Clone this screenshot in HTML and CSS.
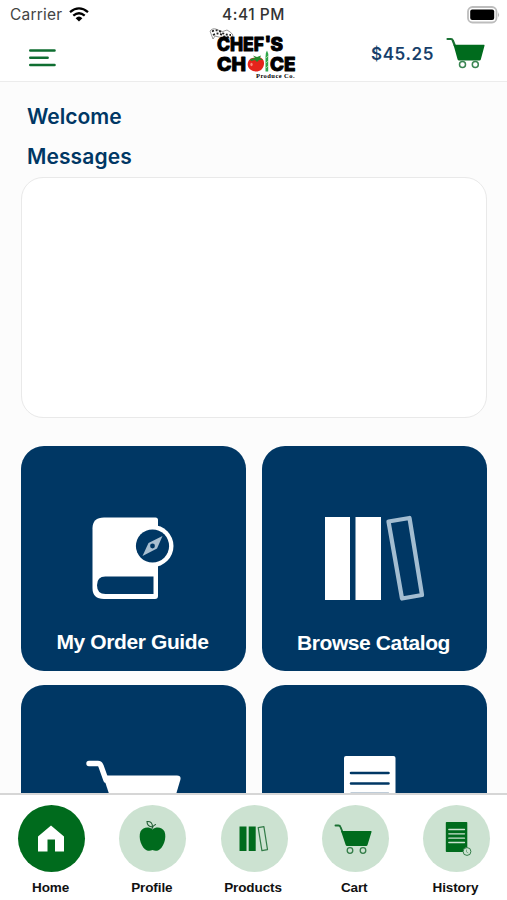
FILE: index.html
```html
<!DOCTYPE html>
<html lang="en">
<head>
	<meta charset="utf-8">
	<meta name="viewport" content="width=device-width, initial-scale=1">
	<title>Chef's Choice Produce Co.</title>
	<link rel="stylesheet" href="styles.css">
</head>
<body>
<div class="app">
	<header class="header">
		<div class="status">
			<div class="carrier">
				<span>Carrier</span>
				<svg width="20" height="15" viewBox="0 0 20 15">
					<path d="M1 5.2Q10-2.4 19 5.2M4.3 8.6Q10 3.8 15.7 8.6" fill="none" stroke="#000" stroke-width="2.3"/>
					<path d="M6.6 11.2Q10 8 13.4 11.2L10 14.6Z"/>
				</svg>
			</div>
			<div class="time">4:41 PM</div>
			<svg class="battery" width="34" height="18" viewBox="0 0 34 18">
				<rect x="1" y="1" width="28.5" height="15.5" rx="4.5" fill="#fff" stroke="#bdbdbd" stroke-width="1.8"/>
				<rect x="3.2" y="3.5" width="24" height="10.5" rx="2"/>
				<path d="M31.2 6q1.8 2.7 0 5.4z" fill="#aaa"/>
			</svg>
		</div>
		<div class="topbar">
			<svg class="menu" width="27" height="18" viewBox="0 0 27 18">
				<path d="M1.3 1.5H25.5M1.3 8.8H18.6M1.3 16H25.5" fill="none" stroke="#0f6e31" stroke-width="2.6" stroke-linecap="round"/>
			</svg>
			<svg class="logo" width="90" height="54" viewBox="0 0 90 54">
				<!-- chequered ribbon -->
				<path d="M1 3Q4-1 9 2T18 2Q22 4 24 7L22 11Q19 8 15 9T6 8L4 11Z" fill="#fff" stroke="#555" stroke-width=".6"/>
				<path d="M3 3.5Q8 1 12 4T22 7M4 7Q9 4 13 7T21 9" fill="none" stroke="#222" stroke-width="1.8" stroke-dasharray="2 1.7"/>
				<g class="logo-name">
					<text x="8" y="23" textLength="47" lengthAdjust="spacingAndGlyphs">CHEF</text>
					<text x="55.5" y="22">'</text>
					<text x="61.5" y="23" textLength="12.5" lengthAdjust="spacingAndGlyphs">S</text>
					<text x="8" y="42.5" textLength="29" lengthAdjust="spacingAndGlyphs">CH</text>
					<text x="61" y="42.5" textLength="25.5" lengthAdjust="spacingAndGlyphs">CE</text>
				</g>
				<!-- tomato and asparagus stand in for the O and the I -->
				<path d="M39.5 33C42 28.5 46 30 47 29.5C51 28 55.5 31 55 36C54.5 41 51 43.500 47 43.5C42 43.5 36.5 39 39.5 33Z" fill="#e5241b"/>
				<path d="M41 31L46 30L44 27.5L48 29L52 27.5L51 30L54 32L50 32L48 34L46 32L42 33Z" fill="#238b2b"/>
				<ellipse cx="42.5" cy="36.5" rx="1.2" ry="1.8" fill="#ff8a7c"/>
				<path d="M56.5 43.5V29Q56.4 24.5 58 22.5Q59.8 25 59.2 30V43.5Z" fill="#2fa64a"/>
				<path d="M57 30l2-2M57 35l2-2M57 40l2-2" stroke="#b5e0a9" stroke-width=".8"/>
				<text class="logo-sub" x="47" y="50.3" textLength="38.5" lengthAdjust="spacing">Produce Co.</text>
			</svg>
			<div class="basket">
				<span>$45.25</span>
				<svg width="40" height="32" viewBox="0 0 40 32">
					<path d="M1.5 2H5Q6.3 2 6.8 3.5L9 9" fill="none" stroke="#1b7134" stroke-width="2.2" stroke-linecap="round"/>
					<path d="M7.5 7.8H38Q38.8 7.8 38.5 8.7L34.8 22.5Q34.5 23.5 33.5 23.5H13Q12 23.5 11.6 22.5Z" fill="#006b1d"/>
					<g fill="#fff" stroke="#398451" stroke-width="1.5">
						<circle cx="16.5" cy="27.5" r="3"/>
						<circle cx="29.3" cy="27.5" r="3"/>
					</g>
				</svg>
			</div>
		</div>
	</header>

	<main class="content">
		<h1>Welcome</h1>
		<h1>Messages</h1>
		<div class="messages"></div>
		<div class="tiles">
			<div class="tile">
				<svg width="84" height="84" viewBox="0 0 84 84">
					<path d="M12 1.5H63.5Q66 1.5 66 4V80Q66 83 63 83H12Q.5 83 .5 72V12.5Q.5 1.5 12 1.5Z" fill="#fff"/>
					<path d="M13.5 60.5H61.5V78H13.5Q5 78 5 69.2T13.5 60.5Z" fill="#003764"/>
					<circle cx="60.5" cy="30" r="21" fill="#fff"/>
					<circle cx="60.5" cy="30" r="16.6" fill="#003764"/>
					<path d="M70.5 20L65 32.5L50.5 40L56.5 27Z" fill="#a9bfd0"/>
					<circle cx="60.5" cy="30" r="2.4" fill="#003764"/>
				</svg>
				<span>My Order Guide</span>
			</div>
			<div class="tile catalog">
				<svg width="100" height="86" viewBox="0 0 100 86">
					<path d="M0 2H25V85H0ZM30.5 2H56V85H30.5Z" fill="#fff"/>
					<path d="M63.5 6.5L84.5 3L97 80L77 83.5Z" fill="none" stroke="#a3bdd1" stroke-width="4.3" stroke-linejoin="round"/>
				</svg>
				<span>Browse Catalog</span>
			</div>
			<div class="tile cart">
				<svg width="98" height="80" viewBox="0 0 98 80">
					<path d="M4 3.5H13Q15 3.5 16 6L21 20" fill="none" stroke="#fff" stroke-width="5.4" stroke-linecap="round"/>
					<path d="M18 15.5H92Q96.5 15.5 95.3 20L84 58H32Z" fill="#fff"/>
					<g fill="none" stroke="#a3bdd1" stroke-width="4">
						<circle cx="41" cy="70" r="7"/>
						<circle cx="74" cy="70" r="7"/>
					</g>
				</svg>
			</div>
			<div class="tile history">
				<svg width="62" height="84" viewBox="0 0 62 84">
					<rect width="51.5" height="70" y="1" rx="2" fill="#fff"/>
					<path d="M7 18H44.5M7 28.5H44.5M7 39H44.5M7 49.5H44.5" stroke="#003764" stroke-width="2.6" stroke-linecap="round"/>
				</svg>
			</div>
		</div>
	</main>

	<nav class="tabs">
		<a class="tab active">
			<div class="circle">
				<svg width="67" height="67" viewBox="0 0 67 67">
					<path d="M33 20.5L46 31.500V46.5H37V34.5H29.5V46.5H20V31.5Z" fill="#fff"/>
				</svg>
			</div>
			<span>Home</span>
		</a>
		<a class="tab">
			<div class="circle">
				<svg width="67" height="67" viewBox="0 0 67 67">
					<path d="M33.5 24.5C37 21.5 43 22 45.5 26.5C48 33 44.5 43 39 45.5Q36 46.3 33.5 45Q31 46.3 28 45.5C22.5 43 19 33 21.5 26.5C24 22 30 21.5 33.5 24.5Z" fill="#006b1d"/>
					<path d="M33 23.5Q34 20.5 36.5 19.5M33.5 22Q28 21.5 28 16.5Q33.5 16 33.5 22Z" fill="none" stroke="#245f37" stroke-width="1.1" stroke-linecap="round"/>
				</svg>
			</div>
			<span>Profile</span>
		</a>
		<a class="tab">
			<div class="circle">
				<svg width="67" height="67" viewBox="0 0 67 67">
					<path d="M18.5 21.5H25.5V46H18.5ZM27.7 21.5H34.7V46H27.7Z" fill="#006b1d"/>
					<path d="M37.2 22.7L42.9 21.7L46.5 44.7L40.9 45.7Z" fill="none" stroke="#327b48" stroke-width="1.2" stroke-linejoin="round"/>
				</svg>
			</div>
			<span>Products</span>
		</a>
		<a class="tab">
			<div class="circle">
				<svg width="67" height="67" viewBox="0 0 67 67">
					<path d="M13.5 20.5H16.5Q18 20.5 18.5 22L20.5 27" fill="none" stroke="#1b7134" stroke-width="1.9" stroke-linecap="round"/>
					<path d="M19 26H49Q49.8 26 49.5 27L45.5 40Q45.2 41 44.2 41H25Q24 41 23.7 40Z" fill="#006b1d"/>
					<g fill="none" stroke="#347d49" stroke-width="1.3">
						<circle cx="28" cy="45.5" r="2.8"/>
						<circle cx="41" cy="45.5" r="2.8"/>
					</g>
				</svg>
			</div>
			<span>Cart</span>
		</a>
		<a class="tab">
			<div class="circle">
				<svg width="67" height="67" viewBox="0 0 67 67">
					<rect x="22.8" y="17" width="21.5" height="30" rx=".8" fill="#006b1d"/>
					<path d="M25.8 24.5H41.5M25.8 28.8H41.5M25.8 33.2H41.5M25.8 37.5H41.5" stroke="#cce2d1" stroke-width="1.3" stroke-linecap="round"/>
					<circle cx="44" cy="46.5" r="3.9" fill="#cce2d1" stroke="#347d49"/>
					<path d="M43.5 44.5V47L45.3 48" fill="none" stroke="#6c9f7a" stroke-width=".8"/>
				</svg>
			</div>
			<span>History</span>
		</a>
	</nav>
</div>
</body>
</html>
```
FILE: styles.css
```css
*{
    box-sizing: border-box;
}
body{
    margin: 0;
    background: #fcfcfc;
    font-family: "Inter", "Liberation Sans", sans-serif;
}
svg{
    display: block;
    flex: none;
}
.app{
    height: 900px;
    display: flex;
    flex-direction: column;
    overflow: hidden;
}

/* status bar + top bar */
.header{
    flex: none;
    height: 82px;
    background: #fff;
    border-bottom: 1px solid #ececec;
}
.status{
    height: 28px;
    display: grid;
    grid-template-columns: 1fr auto 1fr;
    align-items: center;
    padding: 1px 6px 0 10px;
    color: #444;
    font-size: 15.5px;
}
.carrier{
    display: flex;
    align-items: center;
    gap: 7px;
    letter-spacing: .2px;
}
.time{
    color: #333;
    font-weight: 500;
    letter-spacing: .5px;
    padding-right: 4px;
}
.battery{
    justify-self: end;
}
.topbar{
    height: 53px;
    display: grid;
    grid-template-columns: 1fr auto 1fr;
    padding: 0 21px 0 29px;
}
.menu{
    margin-top: 21px;
}
.logo{
    margin: 0 4px 0 -4px;
}
.logo-name{
    font-family: "Inter", sans-serif;
    font-size: 19px;
    font-weight: 800;
    stroke: #000;
    stroke-width: 1px;
    stroke-linejoin: round;
}
.logo-sub{
    font-family: "Liberation Serif", serif;
    font-size: 6.5px;
    font-weight: bold;
}
.basket{
    display: flex;
    justify-self: end;
    gap: 12px;
    padding-top: 9px;
    color: #173f6b;
    font-size: 17px;
    font-weight: 600;
    line-height: 34px;
    letter-spacing: .6px;
}

/* scrolling page */
.content{
    flex: 1;
    min-height: 0;
    overflow: hidden;
    padding: 14px 20px 0 21px;
}
h1{
    margin: 0 0 0 6px;
    height: 40.5px;
    line-height: 41px;
    color: #003764;
    font-size: 21px;
    font-weight: 600;
}
h1 + h1{
    line-height: 39px;
    letter-spacing: .1px;
}
.messages{
    height: 241px;
    border: 1.5px solid #e9e9e9;
    border-radius: 22px;
    background: #fff;
}
.tiles{
    display: grid;
    grid-template-columns: 1fr 1fr;
    gap: 14px 16px;
    margin-top: 28px;
}
.tile{
    height: 225px;
    padding-top: 70px;
    display: flex;
    flex-direction: column;
    align-items: center;
    border-radius: 23px;
    background: #003764;
    color: #fff;
    font-family: "Liberation Sans", sans-serif;
    font-size: 21px;
    font-weight: bold;
    line-height: 24px;
    letter-spacing: -.4px;
}
.tile span{
    margin: 30px 2px 0 0;
}
.catalog{
    padding-top: 69px;
}
.cart{
    padding-top: 75px;
}

/* bottom tabs */
.tabs{
    flex: none;
    height: 107px;
    display: flex;
    padding-left: 1px;
    border-top: 2px solid #d6d6d6;
    background: #fff;
}
.tab{
    flex: 1;
    padding-top: 10px;
    display: flex;
    flex-direction: column;
    align-items: center;
    color: #111;
    font-family: "Liberation Sans", sans-serif;
    font-size: 13.5px;
    font-weight: bold;
    line-height: 18px;
    letter-spacing: -.1px;
}
.tab span{
    margin-right: 2px;
}
.circle{
    width: 67px;
    height: 67px;
    margin-bottom: 7px;
    border-radius: 50%;
    background: #cce2d1;
}
.active .circle{
    background: #006b1d;
}
```
